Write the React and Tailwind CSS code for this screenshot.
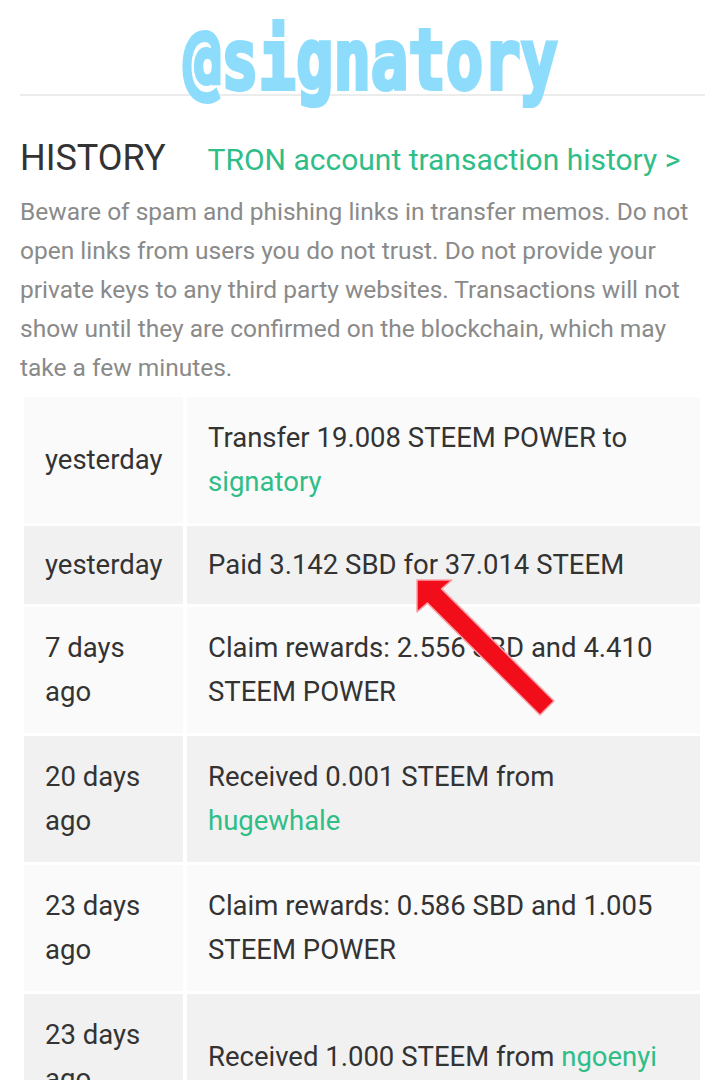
import React from 'react';

const green = 'text-[#2fbd88]';

const rows = [
  { when: ['yesterday'], what: <>Transfer 19.008 STEEM POWER to <span className={green}>signatory</span></>, shade: 'bg-[#fafafa]' },
  { when: ['yesterday'], what: <>Paid 3.142 SBD for 37.014 STEEM</>, shade: 'bg-[#f1f1f1]' },
  { when: ['7 days', 'ago'], what: <>Claim rewards: 2.556 SBD and 4.410 STEEM POWER</>, shade: 'bg-[#fafafa]' },
  { when: ['20 days', 'ago'], what: <>Received 0.001 STEEM from <span className={green}>hugewhale</span></>, shade: 'bg-[#f1f1f1]' },
  { when: ['23 days', 'ago'], what: <>Claim rewards: 0.586 SBD and 1.005 STEEM POWER</>, shade: 'bg-[#fafafa]' },
  { when: ['23 days', 'ago'], what: <>Received 1.000 STEEM from <span className={green}>ngoenyi</span></>, shade: 'bg-[#f1f1f1]' },
];

export default function App() {
  return (
    <div className="relative w-[725px] h-[1080px] overflow-hidden bg-white font-['Roboto',sans-serif]">
      {/* Account name */}
      <div className="relative z-10 flex justify-center h-[94px] pt-[18px] pl-[16px]">
        <span className="inline-block font-['DejaVu_Sans_Mono',monospace] font-bold text-[84px] leading-none text-[#8ddcfc] scale-x-[0.74] [-webkit-text-stroke:4px_#8ddcfc]">
          @signatory
        </span>
      </div>
      <div className="mx-[20px] border-t-2 border-[#ececec]" />

      <div className="px-[20px]">
        <div className="flex items-baseline gap-[42px] mt-[40px]">
          <h2 className="text-[36px] leading-[44px] text-[#333]">HISTORY</h2>
          <a className={`text-[30px] leading-[44px] ${green}`}>TRON account transaction history &gt;</a>
        </div>

        <p className="mt-[10px] text-[24.5px] leading-[39px] text-[#8a8a8a]">
          Beware of spam and phishing links in transfer memos. Do not open links from users you do not trust. Do not provide your private keys to any third party websites. Transactions will not show until they are confirmed on the blockchain, which may take a few minutes.
        </p>
      </div>

      {/* Transactions */}
      <div className="mt-[10px] ml-[24px] w-[676px] grid grid-cols-[159px_1fr] gap-x-[4px] gap-y-[3px] text-[27.5px] leading-[44px] text-[#333]">
        {rows.map((r, i) => (
          <React.Fragment key={i}>
            <div className={`${r.shade} flex flex-col justify-center pl-[21px] ${i === 1 ? 'py-[17px]' : 'py-[19px]'}`}>
              {r.when.map((w) => <span key={w}>{w}</span>)}
            </div>
            <div className={`${r.shade} flex items-center pl-[21px] pr-[16px] ${i === 1 ? 'py-[17px]' : 'py-[19px]'}`}>
              <span>{r.what}</span>
            </div>
          </React.Fragment>
        ))}
      </div>

      {/* Red annotation arrow */}
      <svg className="absolute left-[400px] top-[565px]" width="170" height="160" viewBox="0 0 170 160">
        <path d="M17 15 L52 15 L41.6 23.9 L154 136 L140 150 L27.4 38.1 L17 47 Z" fill="#f20d1a" stroke="#f7a3a8" strokeWidth="1.5" strokeLinejoin="round" />
      </svg>
    </div>
  );
}
